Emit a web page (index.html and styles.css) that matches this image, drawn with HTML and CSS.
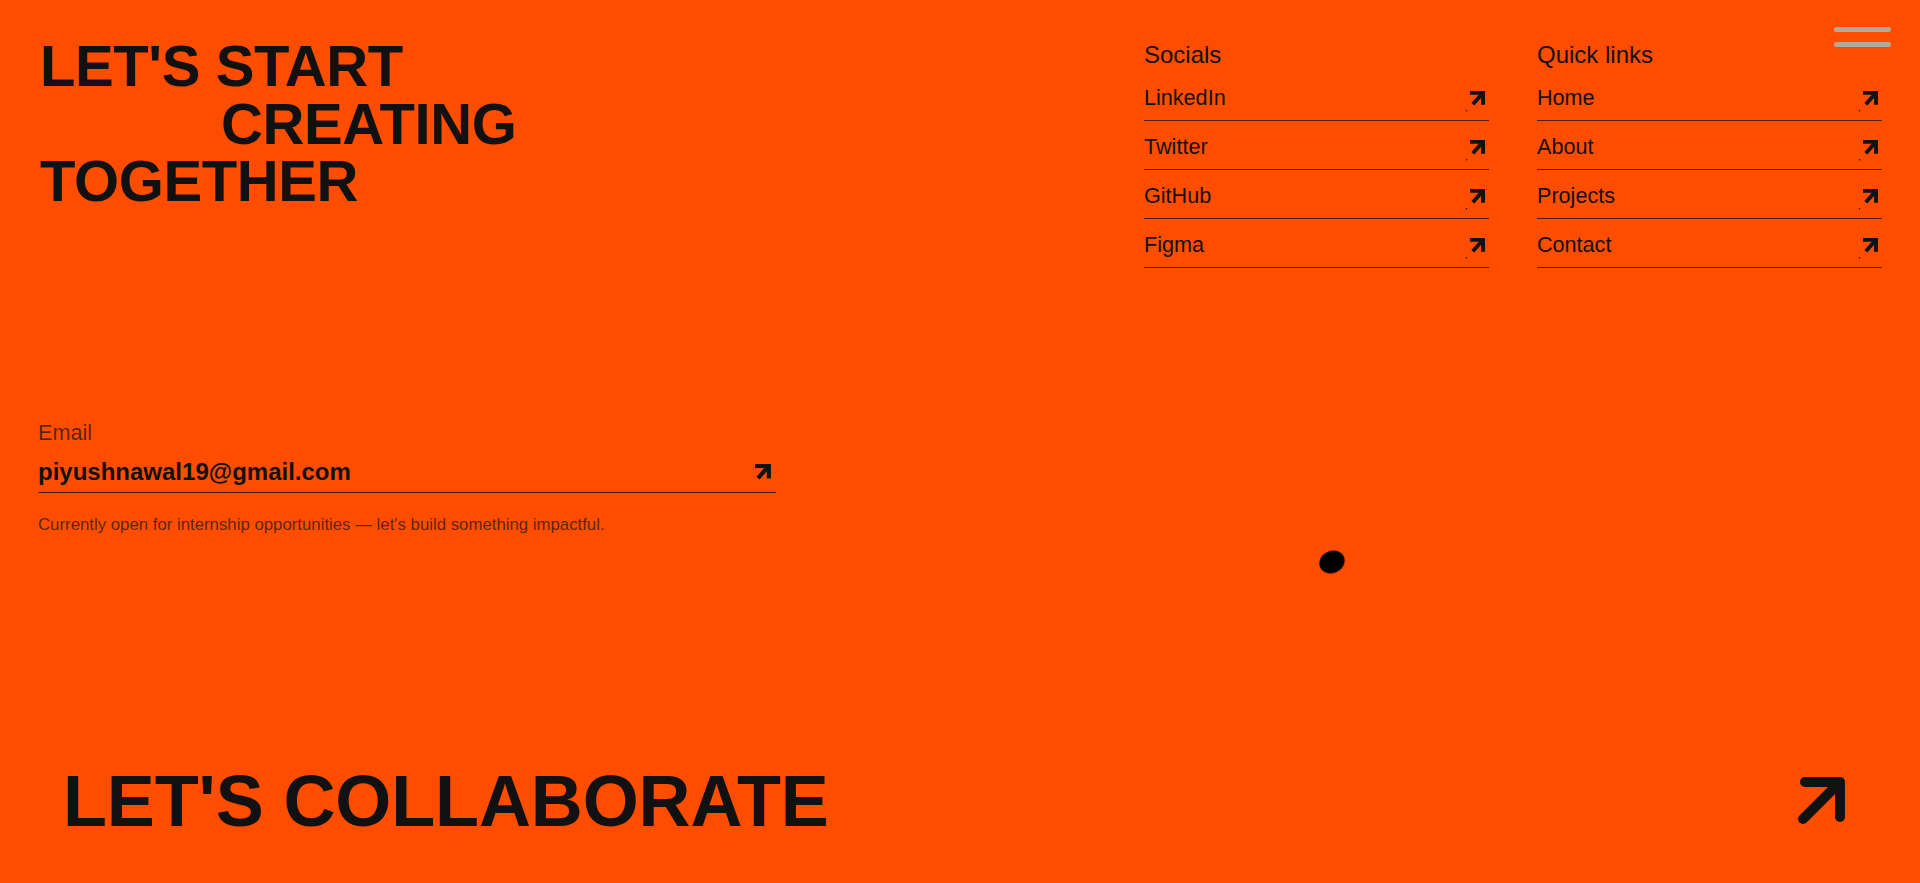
FILE: index.html
```html
<!DOCTYPE html>
<html lang="en">
<head>
<meta charset="utf-8">
<title>Let's collaborate</title>
<link rel="stylesheet" href="styles.css">
</head>
<body>
<div class="page">
  <header class="top">
    <h1 class="title">
      <span class="line">LET'S START</span>
      <span class="line indent">CREATING</span>
      <span class="line">TOGETHER</span>
    </h1>
    <nav class="links">
      <div class="col">
        <h2 class="col-title">Socials</h2>
        <ul class="list">
          <li><a class="row" href="#"><span>LinkedIn</span><svg class="arrow" viewBox="0 0 16 16"><path class="head" d="M2.8 2.7 H13.2 V12"/><path class="shaft" d="M3.6 13.4 L12.6 3.3"/><circle cx="-2.3" cy="19.5" r="0.7"/></svg></a></li>
          <li><a class="row" href="#"><span>Twitter</span><svg class="arrow" viewBox="0 0 16 16"><path class="head" d="M2.8 2.7 H13.2 V12"/><path class="shaft" d="M3.6 13.4 L12.6 3.3"/><circle cx="-2.3" cy="19.5" r="0.7"/></svg></a></li>
          <li><a class="row" href="#"><span>GitHub</span><svg class="arrow" viewBox="0 0 16 16"><path class="head" d="M2.8 2.7 H13.2 V12"/><path class="shaft" d="M3.6 13.4 L12.6 3.3"/><circle cx="-2.3" cy="19.5" r="0.7"/></svg></a></li>
          <li><a class="row" href="#"><span>Figma</span><svg class="arrow" viewBox="0 0 16 16"><path class="head" d="M2.8 2.7 H13.2 V12"/><path class="shaft" d="M3.6 13.4 L12.6 3.3"/><circle cx="-2.3" cy="19.5" r="0.7"/></svg></a></li>
        </ul>
      </div>
      <div class="col">
        <h2 class="col-title">Quick links</h2>
        <ul class="list">
          <li><a class="row" href="#"><span>Home</span><svg class="arrow" viewBox="0 0 16 16"><path class="head" d="M2.8 2.7 H13.2 V12"/><path class="shaft" d="M3.6 13.4 L12.6 3.3"/><circle cx="-2.3" cy="19.5" r="0.7"/></svg></a></li>
          <li><a class="row" href="#"><span>About</span><svg class="arrow" viewBox="0 0 16 16"><path class="head" d="M2.8 2.7 H13.2 V12"/><path class="shaft" d="M3.6 13.4 L12.6 3.3"/><circle cx="-2.3" cy="19.5" r="0.7"/></svg></a></li>
          <li><a class="row" href="#"><span>Projects</span><svg class="arrow" viewBox="0 0 16 16"><path class="head" d="M2.8 2.7 H13.2 V12"/><path class="shaft" d="M3.6 13.4 L12.6 3.3"/><circle cx="-2.3" cy="19.5" r="0.7"/></svg></a></li>
          <li><a class="row" href="#"><span>Contact</span><svg class="arrow" viewBox="0 0 16 16"><path class="head" d="M2.8 2.7 H13.2 V12"/><path class="shaft" d="M3.6 13.4 L12.6 3.3"/><circle cx="-2.3" cy="19.5" r="0.7"/></svg></a></li>
        </ul>
      </div>
    </nav>
  </header>

  <section class="email">
    <div class="email-label">Email</div>
    <a class="email-row" href="#"><span class="email-address">piyushnawal19@gmail.com</span><svg class="arrow arrow-email" viewBox="0 0 16 16"><path class="head" d="M2.8 2.7 H13.2 V12"/><path class="shaft" d="M3.6 13.4 L12.6 3.3"/></svg></a>
    <p class="note">Currently open for internship opportunities — let's build something impactful.</p>
  </section>

  <a class="cta" href="#">
    <span class="cta-text">LET'S COLLABORATE</span>
    <svg class="cta-arrow" viewBox="0 0 48 48"><path d="M5 42 L42 5 M7 5 H42 V40"/></svg>
  </a>
</div>

<button class="menu" aria-label="Menu"><span class="bar"></span><span class="bar"></span></button>
<div class="cursor"></div>
</body>
</html>
```
FILE: styles.css
```css
* {
  box-sizing: border-box;
}

html, body {
  margin: 0;
  padding: 0;
}

body {
  background: #ff4d00;
  color: #111111;
  font-family: "Liberation Sans", Arial, Helvetica, sans-serif;
  overflow: hidden;
}

a {
  color: inherit;
  text-decoration: none;
}

.page {
  position: relative;
  height: 883px;
  display: flex;
  flex-direction: column;
  padding: 37px 38px 46px 38px;
}

/* ---------- top ---------- */
.top {
  display: flex;
  justify-content: space-between;
  align-items: flex-start;
}

.title {
  margin: 0 0 0 2px;
  font-size: 58px;
  font-weight: 700;
  line-height: 57.5px;
  letter-spacing: -0.4px;
  color: #111111;
}

.title .line {
  display: block;
  white-space: nowrap;
}

.title .indent {
  padding-left: 181px;
}

.links {
  display: flex;
  gap: 48px;
  margin-top: 4px;
}

.col {
  width: 345px;
}

.col-title {
  margin: 0 0 3px 0;
  font-size: 24px;
  font-weight: 400;
  line-height: 28px;
}

.list {
  list-style: none;
  margin: 0;
  padding: 0;
}

.row {
  display: flex;
  justify-content: space-between;
  align-items: center;
  padding: 14px 0 10px 0;
  font-size: 21.6px;
  line-height: 24px;
  border-bottom: 1px solid rgba(17, 17, 17, 0.75);
}

.arrow {
  width: 17px;
  height: 17px;
  margin-right: 3px;
  overflow: visible;
  flex: none;
}

.arrow path {
  fill: none;
  stroke: #111111;
  stroke-width: 3.7;
}

.arrow .head {
  stroke-linecap: square;
  stroke-linejoin: miter;
}

.arrow .shaft {
  stroke-linecap: butt;
}

.arrow circle {
  fill: #111111;
}

/* ---------- email ---------- */
.email {
  margin-top: 153px;
  width: 40%;
}

.email-label {
  font-size: 21.6px;
  line-height: 24px;
  color: rgba(17, 17, 17, 0.7);
  margin-bottom: 13px;
}

.email-row {
  display: flex;
  justify-content: space-between;
  align-items: center;
  padding-bottom: 6px;
  border-bottom: 1px solid rgba(17, 17, 17, 0.78);
}

.email-address {
  font-size: 24px;
  font-weight: 700;
  line-height: 28px;
}

.arrow-email {
  width: 18px;
  height: 18px;
  margin-right: 4px;
}

.note {
  margin: 22px 0 0 0;
  font-size: 16.8px;
  line-height: 20px;
  color: rgba(17, 17, 17, 0.7);
}

/* ---------- bottom call to action ---------- */
.cta {
  margin-top: auto;
  display: flex;
  justify-content: space-between;
  align-items: center;
  padding: 0 36px 0 25px;
}

.cta-text {
  font-size: 72px;
  font-weight: 700;
  line-height: 72px;
  letter-spacing: -0.12px;
  white-space: nowrap;
}

.cta-arrow {
  width: 48px;
  height: 48px;
  flex: none;
}

.cta-arrow path {
  fill: none;
  stroke: #111111;
  stroke-width: 10;
  stroke-linecap: round;
  stroke-linejoin: round;
}

/* ---------- overlays ---------- */
.menu {
  position: fixed;
  top: 27px;
  right: 29px;
  width: 57px;
  height: 20px;
  padding: 0;
  border: 0;
  background: transparent;
  display: flex;
  flex-direction: column;
  justify-content: space-between;
  cursor: pointer;
}

.menu .bar {
  display: block;
  width: 100%;
  height: 5px;
  border-radius: 3px;
  background: #b5aa96;
}

.cursor {
  position: fixed;
  left: 1319px;
  top: 551px;
  width: 26px;
  height: 22px;
  border-radius: 50%;
  background: #000000;
  transform: rotate(-25deg);
  pointer-events: none;
}
```
